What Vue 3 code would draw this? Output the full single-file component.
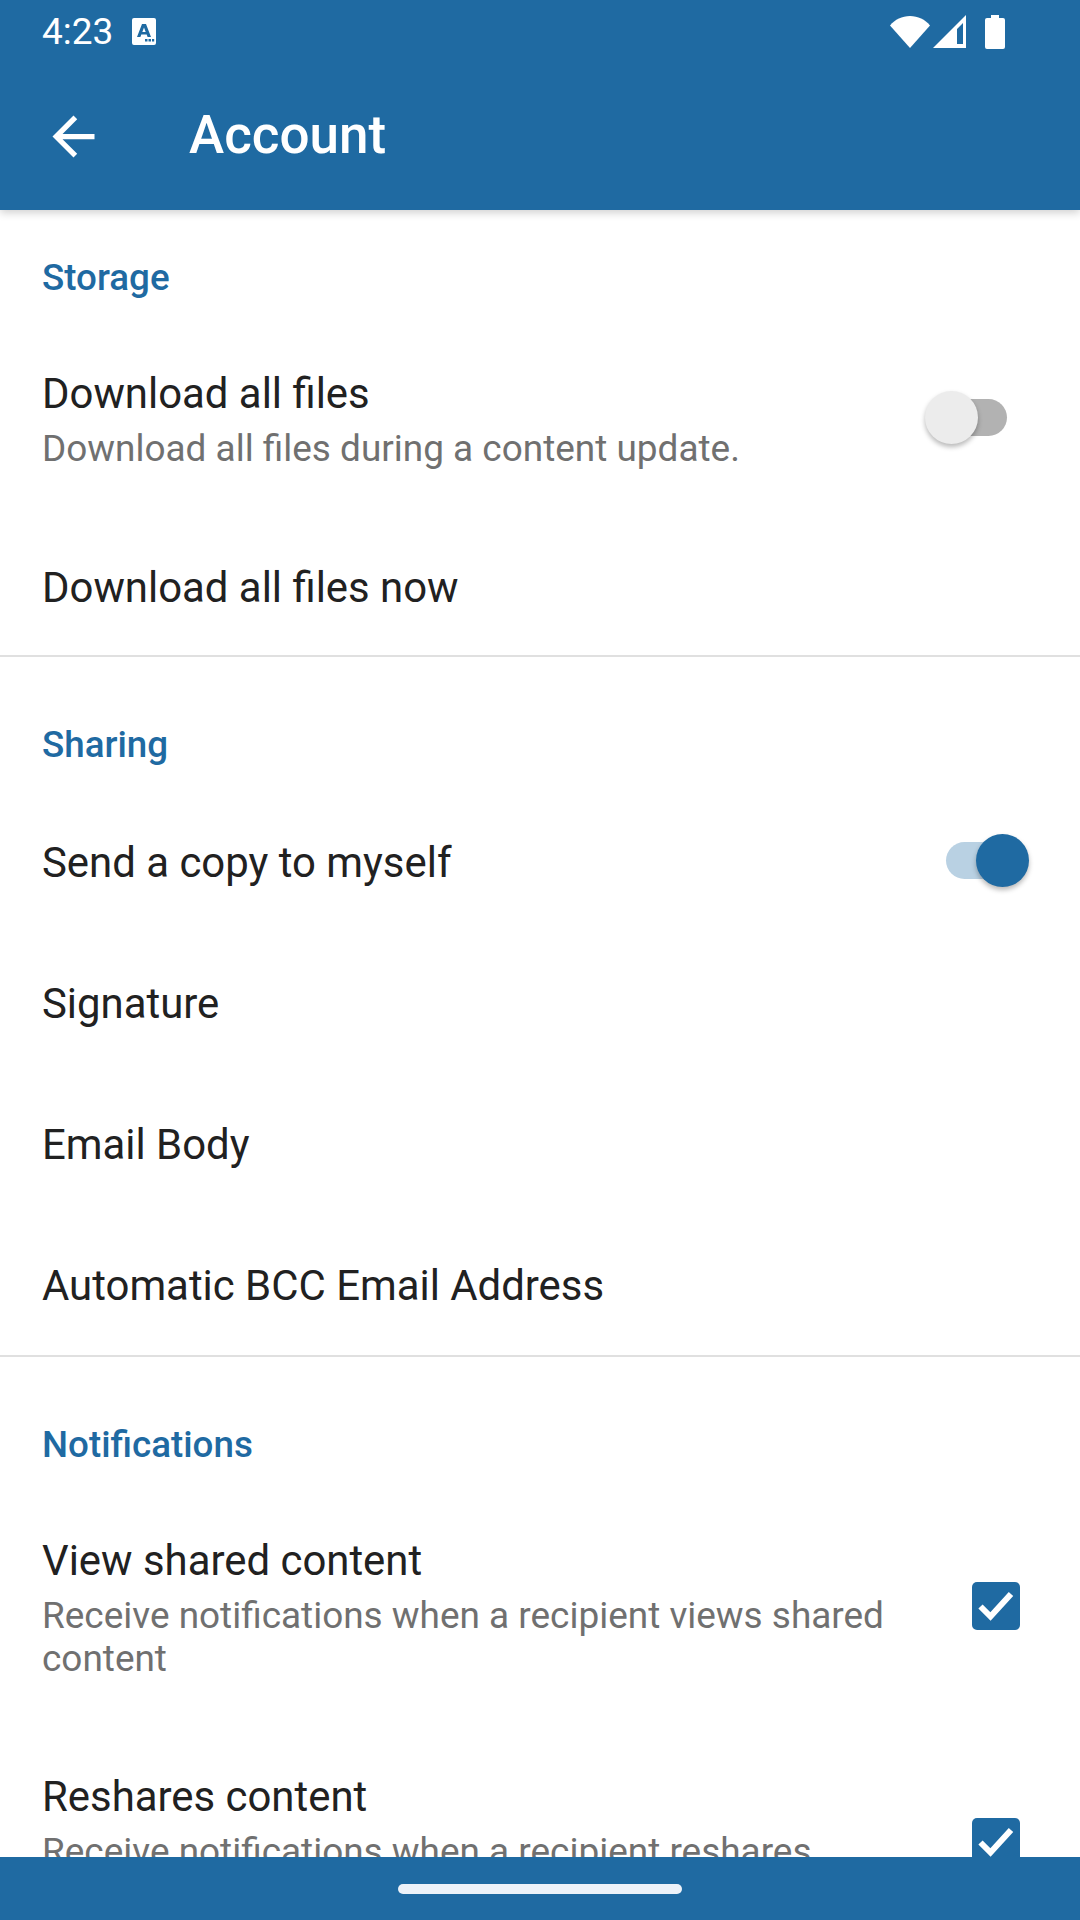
<template>
  <div class="screen">
    <header class="appbar">
      <div class="status">
        <span class="time">4:23</span>
        <svg class="notif" viewBox="0 0 24 27" width="24" height="27">
          <path fill="#fff" fill-rule="evenodd" d="M2 0h20a2 2 0 0 1 2 2v23a2 2 0 0 1-2 2H2a2 2 0 0 1-2-2V2a2 2 0 0 1 2-2zM10 6l-5 13h3.400l.9-2.600h5.400l.9 2.600H19L14 6zM12 9.500l1.700 4.500h-3.400zM13 21h2.500v2.500H13zM16.500 21H19v2.500h-2.500zM20 21h2.200v2.500H20z"/>
        </svg>
        <span class="spacer"></span>
        <svg class="wifi" viewBox="0 0 40 32" width="40" height="32">
          <path fill="#fff" d="M0 9.500C5 3.500 12 0 20 0s15 3.500 20 9.500L20 32z"/>
        </svg>
        <svg class="signal" viewBox="0 0 33 33" width="33" height="33">
          <path fill="#fff" fill-rule="evenodd" d="M33 0V33H0zM30 8 24 14V29H30z"/>
        </svg>
        <svg class="battery" viewBox="0 0 20 34" width="20" height="34">
          <path fill="#fff" d="M6 0h8v3h4a2 2 0 0 1 2 2v27a2 2 0 0 1-2 2H2a2 2 0 0 1-2-2V5a2 2 0 0 1 2-2h4z"/>
        </svg>
      </div>
      <div class="toolbar">
        <svg class="back" viewBox="0 0 24 24" width="63" height="63">
          <path fill="#fff" d="M20 11H7.830l5.590-5.590L12 4l-8 8 8 8 1.410-1.410L7.830 13H20v-2z"/>
        </svg>
        <h1>Account</h1>
      </div>
    </header>

    <main class="content">
      <section v-for="(group, i) in groups" :key="group.title" class="group">
        <h2 :class="{ first: i === 0 }">{{ group.title }}</h2>
        <div v-for="row in group.rows" :key="row.title" class="row" :class="{ tall: row.sub }">
          <div class="text">
            <div class="title">{{ row.title }}</div>
            <div v-if="row.sub" class="sub">{{ row.sub }}</div>
          </div>
          <div v-if="row.kind === 'switch'" class="switch" :class="{ on: row.on }">
            <span class="track"></span>
            <span class="thumb"></span>
          </div>
          <div v-if="row.kind === 'check'" class="check">
            <svg viewBox="0 0 48 48" width="48" height="48">
              <path fill="none" stroke="#fff" stroke-width="6" d="M8.500 24.500 18.500 34.500 39 12"/>
            </svg>
          </div>
        </div>
      </section>
    </main>

    <footer class="navbar"><span class="handle"></span></footer>
  </div>
</template>

<script setup>
const groups = [
  {
    title: 'Storage',
    rows: [
      { title: 'Download all files', sub: 'Download all files during a content update.', kind: 'switch', on: false },
      { title: 'Download all files now' }
    ]
  },
  {
    title: 'Sharing',
    rows: [
      { title: 'Send a copy to myself', kind: 'switch', on: true },
      { title: 'Signature' },
      { title: 'Email Body' },
      { title: 'Automatic BCC Email Address' }
    ]
  },
  {
    title: 'Notifications',
    rows: [
      { title: 'View shared content', sub: 'Receive notifications when a recipient views shared content', kind: 'check' },
      { title: 'Reshares content', sub: 'Receive notifications when a recipient reshares content', kind: 'check' }
    ]
  }
]
</script>

<style scoped>
.screen {
  height: 1920px;
  display: flex;
  flex-direction: column;
  overflow: hidden;
  background: #fff;
  font-family: Roboto, sans-serif;
  color: #212121;
}

.appbar {
  position: relative;
  z-index: 1;
  height: 210px;
  flex-shrink: 0;
  background: #1f6aa2;
  box-shadow: 0 3px 8px rgba(0, 0, 0, 0.18);
  color: #fff;
}

.status {
  height: 63px;
  display: flex;
  align-items: center;
  padding: 0 75px 0 42px;
}

.time {
  font-size: 37px;
  line-height: 63px;
}

.notif {
  margin-left: 19px;
}

.spacer {
  flex: 1;
}

.signal {
  margin-left: 3px;
}

.battery {
  margin-left: 19px;
}

.toolbar {
  height: 147px;
  display: flex;
  align-items: center;
  padding-left: 42px;
}

h1 {
  margin: 0 0 4px 84px;
  font-size: 53px;
  font-weight: 500;
}

.content {
  flex: 1;
  min-height: 0;
  overflow: hidden;
}

.group {
  border-bottom: 2px solid #e0e0e0;
}

h2 {
  margin: 0;
  padding: 66px 42px 19px;
  font-size: 36.750px;
  line-height: 43px;
  font-weight: 500;
  color: #1f6aa2;
}

h2.first {
  padding-top: 46px;
}

.row {
  min-height: 141px;
  display: flex;
  align-items: center;
  padding: 0 51px 0 42px;
  box-sizing: border-box;
}

.row.tall {
  padding-top: 45px;
  padding-bottom: 41px;
}

/* single-line rows sit a little lower after a header or a summary row */
h2 + .row:not(.tall) {
  margin-top: 6px;
}

.row.tall + .row:not(.tall) {
  margin-top: 3px;
  padding-top: 4px;
}

.text {
  flex: 1;
  min-width: 0;
  padding-right: 50px;
}

.row:not(.tall) .text {
  padding-top: 2px;
}

.title {
  font-size: 41.900px;
  line-height: 62px;
}

.sub {
  margin-top: 2px;
  font-size: 36.950px;
  line-height: 43px;
  color: #707070;
}

.switch {
  position: relative;
  width: 104px;
  height: 53px;
  flex-shrink: 0;
}

.row:not(.tall) .switch {
  margin-top: -2px;
}

.row.tall .switch {
  margin-top: 2px;
}

.track {
  position: absolute;
  left: 21px;
  top: 8px;
  width: 61px;
  height: 37px;
  border-radius: 19px;
  background: #b2b2b2;
}

.thumb {
  position: absolute;
  left: 0;
  top: 0;
  width: 53px;
  height: 53px;
  border-radius: 50%;
  background: #ececec;
  box-shadow: 0 3px 5px rgba(0, 0, 0, 0.28);
}

.switch.on .track {
  background: #b9d1e3;
}

.switch.on .thumb {
  left: 51px;
  background: #1f6aa2;
}

.check {
  width: 48px;
  height: 48px;
  margin: 2px 9px 0 0;
  flex-shrink: 0;
  border-radius: 5px;
  background: #1f6aa2;
}

.check svg {
  display: block;
}

.navbar {
  height: 63px;
  flex-shrink: 0;
  position: relative;
  z-index: 1;
  display: flex;
  align-items: center;
  justify-content: center;
  background: #1f6aa2;
}

.handle {
  width: 284px;
  height: 10px;
  border-radius: 5px;
  background: #edf2f9;
}
</style>
